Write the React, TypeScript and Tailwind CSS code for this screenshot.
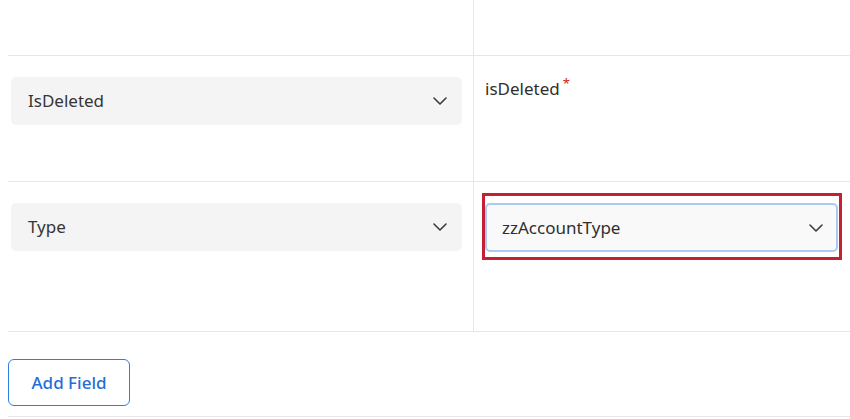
import React from "react";

const Chevron = () => (
	<svg width="14" height="8" viewBox="0 0 14 8" fill="none" className="shrink-0">
		<polyline points="1,1 7,7 13,1" stroke="#3d3d3d" strokeWidth="1.6" strokeLinecap="round" strokeLinejoin="round" />
	</svg>
);

const Select: React.FC<{ label: string }> = ({ label }) => (
	<div className="flex h-12 items-center justify-between rounded-[5px] bg-[#f4f4f4] pl-[17px] pr-[15px] text-[17px] text-[#353535]">
		<span>{label}</span>
		<Chevron />
	</div>
);

type Row = {
	left?: string;
	right?: React.ReactNode;
	height: string;
};

export default function App() {
	const rows: Row[] = [
		{ height: "h-[56px]" },
		{
			left: "IsDeleted",
			height: "h-[126px]",
			right: (
				<div className="-mt-[1px] text-[17px] text-[#2f2f2f]">
					isDeleted
					<span className="relative -top-[7px] ml-[3px] text-[13px] text-[#d11a1a]">*</span>
				</div>
			),
		},
		{
			left: "Type",
			height: "h-[150px]",
			right: (
				<div className="relative mr-[12px]">
					<div className="flex h-[49px] items-center justify-between rounded-[5px] border-2 border-[#a9cbf3] bg-[#f9f9f9] pl-[15px] pr-[13px] text-[17px] text-[#2f2f2f]">
						<span>zzAccountType</span>
						<Chevron />
					</div>
					{/* annotation box */}
					<div className="pointer-events-none absolute -left-[3px] -right-[4px] -top-[10px] -bottom-[8px] border-[3px] border-[#c51f33]" />
				</div>
			),
		},
	];

	return (
		<div className="h-[419px] w-[850px] overflow-hidden bg-white pl-2" style={{ fontFamily: '"Noto Sans", "Open Sans", sans-serif' }}>
			{rows.map((row, i) => (
				<div key={i} className={`grid grid-cols-[465px_1fr] border-b border-[#e7e7e7] ${row.height}`}>
					<div className="pl-[3px] pr-[11px] pt-[21px]">
						{row.left && <Select label={row.left} />}
					</div>
					<div className="border-l border-[#e7e7e7] pl-[11px] pt-[21px]">{row.right}</div>
				</div>
			))}

			<div className="border-b border-[#e7e7e7] pb-[10px] pt-[27px]">
				<button className="h-[47px] w-[122px] rounded-[6px] border border-[#2d7ee0] bg-white text-[17px] font-medium text-[#1f6fd6]">
					Add Field
				</button>
			</div>
		</div>
	);
}
